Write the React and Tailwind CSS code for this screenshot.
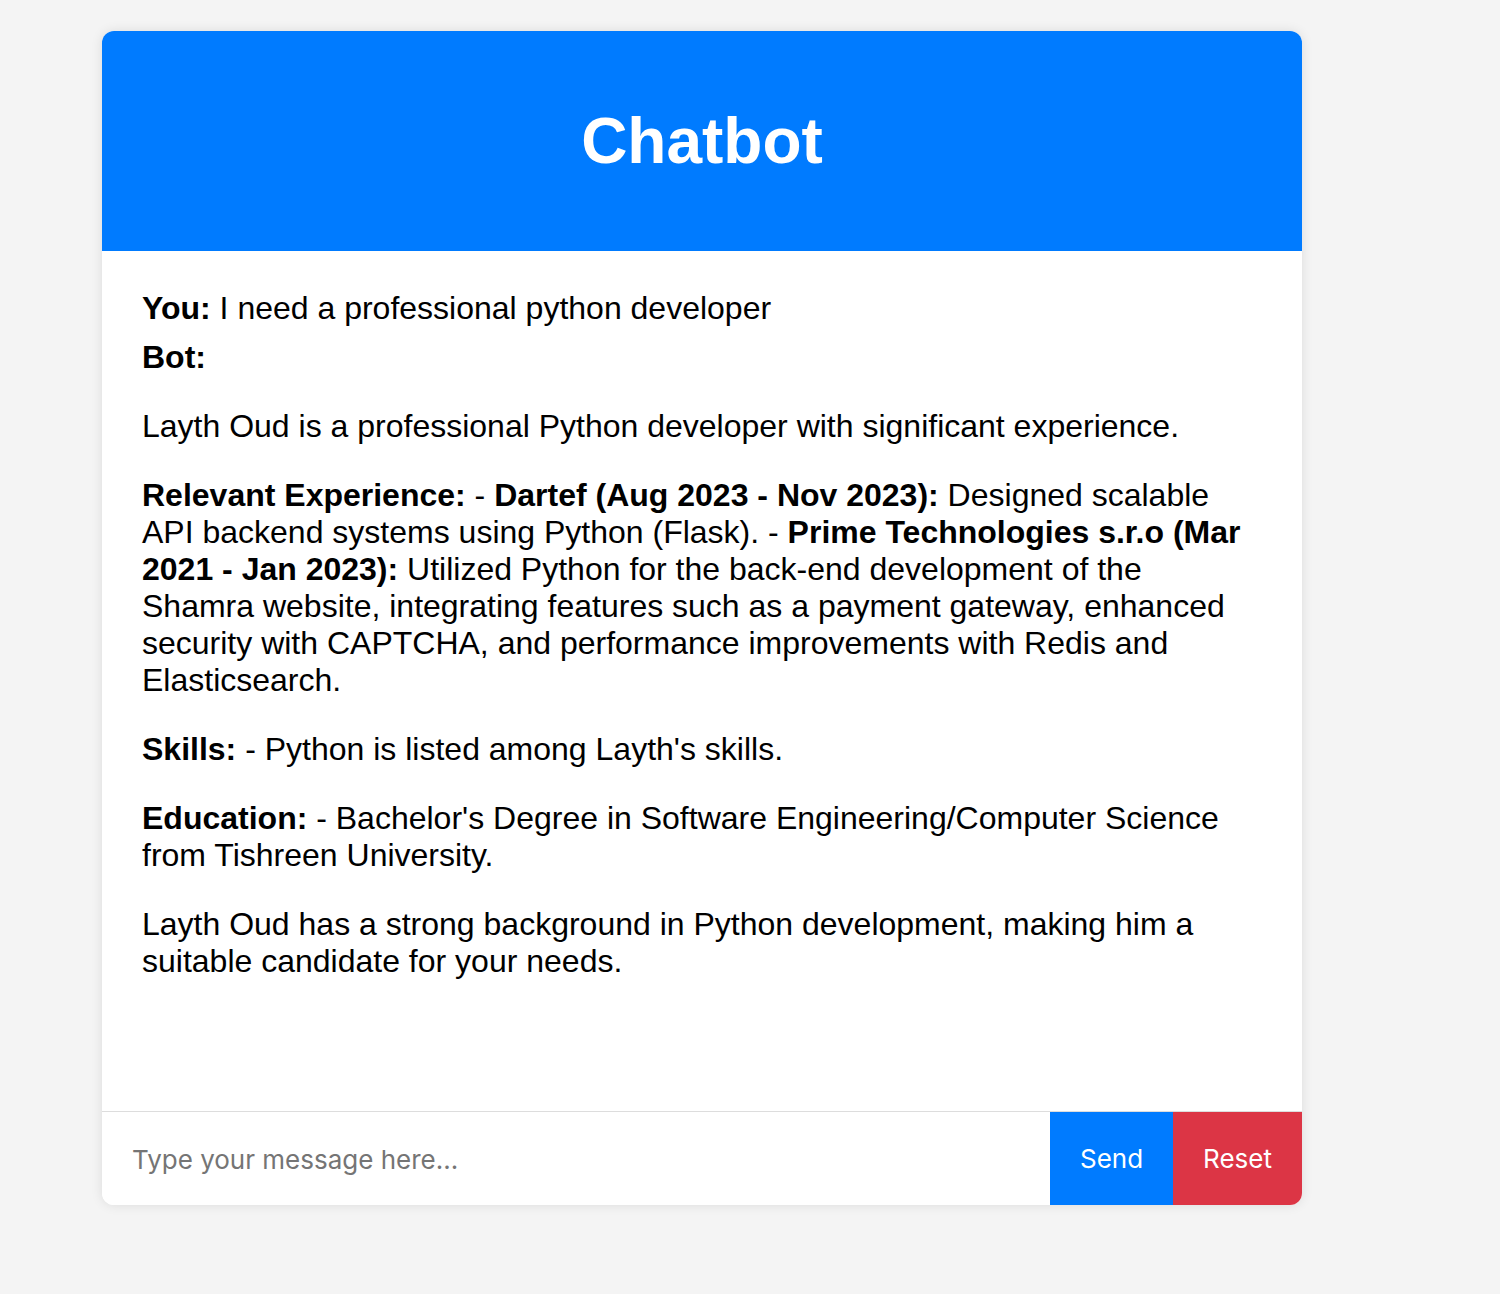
import React, { useState } from 'react';

const messages = [
    { sender: 'You', text: 'I need a professional python developer' },
];

const Chatbot = () => {
    const [input, setInput] = useState('');

    return (
        <div className="min-h-[1294px] bg-[#f4f4f4] pt-[31px] pl-[102px] font-['Liberation_Sans',Arial,sans-serif] text-black">
            <div className="w-[1200px] rounded-xl bg-white shadow-[0_0_12px_rgba(0,0,0,0.1)] overflow-hidden">
                <div className="h-[220px] bg-[#007bff] flex items-center justify-center">
                    <h1 className="text-[64px] font-bold text-white leading-none">Chatbot</h1>
                </div>

                <div className="h-[860px] overflow-y-auto px-10 pt-[39px] text-[32px] leading-[37px]">
                    {messages.map((m, i) => (
                        <div key={i} className="mb-3">
                            <strong>{m.sender}:</strong> {m.text}
                        </div>
                    ))}
                    <div className="mb-3">
                        <strong>Bot:</strong>
                        <p className="my-8">Layth Oud is a professional Python developer with significant experience.</p>
                        <p className="my-8">
                            <strong>Relevant Experience:</strong> - <strong>Dartef (Aug 2023 - Nov 2023):</strong> Designed scalable API backend systems using Python (Flask). - <strong>Prime Technologies s.r.o (Mar 2021 - Jan 2023):</strong> Utilized Python for the back-end development of the Shamra website, integrating features such as a payment gateway, enhanced security with CAPTCHA, and performance improvements with Redis and Elasticsearch.
                        </p>
                        <p className="my-8">
                            <strong>Skills:</strong> - Python is listed among Layth's skills.
                        </p>
                        <p className="my-8">
                            <strong>Education:</strong> - Bachelor's Degree in Software Engineering/Computer Science from Tishreen University.
                        </p>
                        <p className="my-8">
                            Layth Oud has a strong background in Python development, making him a suitable candidate for your needs.
                        </p>
                    </div>
                </div>

                <div className="flex h-[94px] border-t border-[#ddd] font-['Inter',sans-serif] text-[26px]">
                    <input
                        value={input}
                        onChange={(e) => setInput(e.target.value)}
                        placeholder="Type your message here..."
                        className="flex-1 px-[30px] pt-[2px] outline-none placeholder:text-[#757575] bg-white"
                    />
                    <button className="bg-[#007bff] text-white px-[30px]">Send</button>
                    <button className="bg-[#dc3545] text-white px-[30px]">Reset</button>
                </div>
            </div>
        </div>
    );
};

export default Chatbot;
